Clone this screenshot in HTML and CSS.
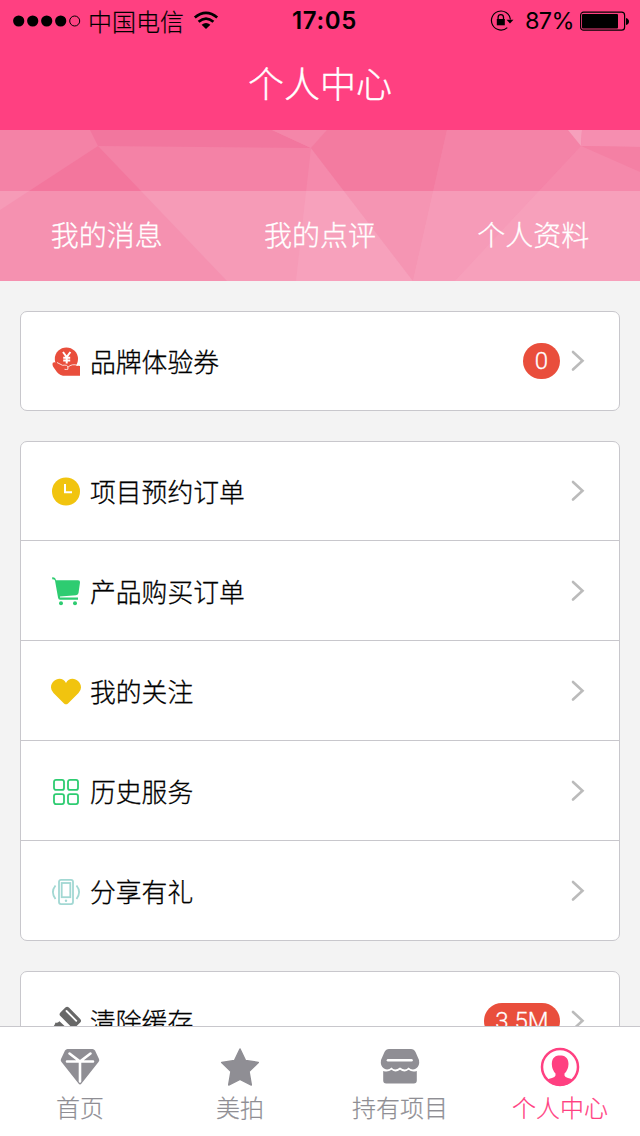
FILE: index.html
```html
<!DOCTYPE html>
<html lang="zh-CN">
<head>
<meta charset="utf-8">
<title>个人中心</title>
<link rel="stylesheet" href="styles.css">
</head>
<body>
<div class="app">
  <header class="header">
    <div class="status">
      <div class="status-left">
        <svg class="signal" width="68" height="12" viewBox="0 0 68 12"><circle cx="5.7" cy="6" r="5.6"/><circle cx="19.7" cy="6" r="5.6"/><circle cx="33.7" cy="6" r="5.6"/><circle cx="47.7" cy="6" r="5.6"/><circle cx="61.7" cy="6" r="5" fill="none" stroke="#000"/></svg>
        <span class="carrier">中国电信</span>
        <svg class="wifi" width="26" height="19" viewBox="0 0 26 19" fill="none" stroke="#000" stroke-width="2.800"><path d="M1.800 6.500Q13-2.800 24.200 6.500"/><path d="M5.600 10.800Q13 4.500 20.400 10.800"/><path d="M13 18L8.600 13.700Q13 10.300 17.400 13.700Z" fill="#000" stroke="none"/></svg>
      </div>
      <div class="clock">17:05</div>
      <div class="status-right">
        <svg class="lock" width="24" height="22" viewBox="0 0 24 22" fill="none" stroke="#000" stroke-width="1.200"><path d="M20.400 9.500A9.500 9.500 0 1 0 17.300 17.600"/><path d="M16.500 9.800h7l-3.500 3.700z" fill="#000" stroke="none"/><rect x="6.800" y="9" width="8" height="6.300" fill="#000" stroke="none"/><path d="M8.100 9.500V7.300a2.700 2.700 0 0 1 5.400 0V9.500" stroke-width="1.300"/></svg>
        <span class="percent">87%</span>
        <svg class="battery" width="49" height="20" viewBox="0 0 49 20"><rect x=".6" y="1.200" width="44" height="18" rx="3" fill="none" stroke="#000" stroke-width="1.200"/><rect x="2" y="3" width="36" height="14.600" rx="1"/><path d="M46 7q3 1 3 3.500t-3 3.500z"/></svg>
      </div>
    </div>
    <h1 class="title">个人中心</h1>
  </header>

  <section class="banner">
    <svg class="facets" width="640" height="151" viewBox="0 0 640 151">
      <rect width="640" height="151" fill="#f482a6"/>
      <path d="M90 0H272L311 18L98 16Z" fill="#f2769e"/>
      <path d="M98 16L227 151H0V80Z" fill="#f3769d"/>
      <path d="M272 0H327L311 18Z" fill="#f486a9"/>
      <path d="M311 18L413 151H296Z" fill="#f58aac"/>
      <path d="M327 0H447L413 151L311 18Z" fill="#f37ba0"/>
      <path d="M447 0H568L581 16L455 151H413Z" fill="#f483a7"/>
      <path d="M568 0H582L581 16Z" fill="#f6a0bc"/>
      <path d="M582 0H640V17L581 16Z" fill="#f68eb0"/>
      <path d="M581 16L640 17V42Z" fill="#f480a4"/>
      <path d="M581 16L640 42V151H455Z" fill="#f589ab"/>
    </svg>
    <nav class="banner-tabs"><a>我的消息</a><a>我的点评</a><a>个人资料</a></nav>
  </section>

  <main class="content">
    <section class="card">
      <div class="row">
        <svg class="icon" width="32" height="32" viewBox="0 0 32 32"><circle cx="16.400" cy="14" r="11.600" fill="#e94e3c"/><path d="M13 7L16.700 12L20.400 7M16.700 12V18.500M13.200 12.700H20.200M13.200 15.600H20.200" fill="none" stroke="#fff" stroke-width="2"/><path d="M2.800 17.800Q4.500 16.600 7.500 18.200L12.500 20.600Q17.500 20 17.500 22.800Q22 18.600 26.500 20.600L30 21V30.800H13Q8 29.500 5.500 25Q1.500 20.500 2.800 17.800Z" fill="#e94e3c"/><path d="M7 17.500L12.500 20.300Q18 19.500 17.800 22.300Q22 18.200 28 20.500M14.500 24.300Q16.500 24.800 18 24.200L17.800 22.300" fill="none" stroke="#fff" stroke-width=".8"/></svg>
        <span class="label">品牌体验券</span><span class="badge">0</span>
        <svg class="chevron" width="14" height="22" viewBox="0 0 14 22"><path d="M2 2L11.500 10.700L2 19.500"/></svg>
      </div>
    </section>

    <section class="card card-list">
      <div class="row">
        <svg class="icon" width="32" height="32" viewBox="0 0 32 32"><circle cx="16" cy="16.500" r="14" fill="#f1c40f"/><path d="M15 9V17.300H22" fill="none" stroke="#fff" stroke-width="2"/></svg>
        <span class="label">项目预约订单</span>
        <svg class="chevron" width="14" height="22" viewBox="0 0 14 22"><path d="M2 2L11.500 10.700L2 19.500"/></svg>
      </div>
      <div class="row">
        <svg class="icon" width="32" height="32" viewBox="0 0 32 32" fill="#2ecc71"><path d="M6 5.200H28Q30.300 5.300 30 7.500L28.500 18Q28.200 20 26 20.300L10 21.500V22.500H28V24.700H10Q8.300 24.700 8 22.500L5 5.500Q4.700 4.200 2.200 4.200V2.300Q5.500 2 6 5.200Z"/><circle cx="11" cy="28.200" r="2"/><circle cx="25" cy="28.200" r="2"/></svg>
        <span class="label">产品购买订单</span>
        <svg class="chevron" width="14" height="22" viewBox="0 0 14 22"><path d="M2 2L11.500 10.700L2 19.500"/></svg>
      </div>
      <div class="row">
        <svg class="icon" width="32" height="32" viewBox="0 0 32 32"><path d="M16 8C20-.1 31 4.400 31 12.400Q31 15.400 28.500 17.900L18 28.400Q16 30.200 14 28.400L3.500 17.900Q1 15.400 1 12.400C1 4.400 12-.1 16 8Z" fill="#f1c40f"/></svg>
        <span class="label">我的关注</span>
        <svg class="chevron" width="14" height="22" viewBox="0 0 14 22"><path d="M2 2L11.500 10.700L2 19.500"/></svg>
      </div>
      <div class="row">
        <svg class="icon" width="32" height="32" viewBox="0 0 32 32" fill="none" stroke="#2ecc71" stroke-width="1.800"><rect x="4" y="4.900" width="10" height="10" rx="2"/><rect x="18" y="4.900" width="10" height="10" rx="2"/><rect x="4" y="19.100" width="10" height="10" rx="2"/><rect x="18" y="19.100" width="10" height="10" rx="2"/></svg>
        <span class="label">历史服务</span>
        <svg class="chevron" width="14" height="22" viewBox="0 0 14 22"><path d="M2 2L11.500 10.700L2 19.500"/></svg>
      </div>
      <div class="row">
        <svg class="icon" width="32" height="32" viewBox="0 0 32 32" fill="none" stroke="#a2d8d3" stroke-width="1.800"><rect x="9" y="4.800" width="14" height="24.300" rx="2"/><rect x="11.700" y="8" width="8.600" height="14.200"/><path d="M5.500 10.500Q.3 17 5.500 24M26.500 10.500Q31.700 17 26.500 24"/><circle cx="16" cy="25.700" r="1.200" fill="#a2d8d3" stroke="none"/></svg>
        <span class="label">分享有礼</span>
        <svg class="chevron" width="14" height="22" viewBox="0 0 14 22"><path d="M2 2L11.500 10.700L2 19.500"/></svg>
      </div>
    </section>

    <section class="card">
      <div class="row">
        <svg class="icon" width="32" height="32" viewBox="0 0 32 32" fill="#686868"><rect x="9.800" y="6.500" width="21" height="12" rx="2.500" transform="rotate(45 20.300 12.500)"/><path d="M16.500 6L26.300 15.800" stroke="#fff" stroke-width="1.800" stroke-linecap="round"/><path d="M9.500 16.300L21 27L17 31L2 22.500Q5 20.500 5.500 17.500Q7 18.500 9.500 16.300Z"/></svg>
        <span class="label">清除缓存</span><span class="badge">3.5M</span>
        <svg class="chevron" width="14" height="22" viewBox="0 0 14 22"><path d="M2 2L11.500 10.700L2 19.500"/></svg>
      </div>
    </section>
  </main>

  <footer class="tabbar">
    <a class="tab"><svg width="40" height="40" viewBox="0 0 40 40" fill="#8f8e94"><path d="M7.500 2H32.500Q34 2 35 3.500L39 12Q39.800 13.500 38.500 15L21.500 36.500Q20 38.300 18.500 36.500L1.500 15Q.2 13.500 1 12L5 3.500Q6 2 7.500 2Z"/><path d="M9.500 6.500L20 14.500L30.500 6.500M7 14.500H33M20 14.500V34.500" fill="none" stroke="#fff" stroke-width="2.600" stroke-linecap="round"/></svg><span>首页</span></a>
    <a class="tab"><svg width="40" height="40" viewBox="0 0 40 40" fill="#8f8e94" stroke="#8f8e94" stroke-width="1.500" stroke-linejoin="round"><path d="M20 2L25.500 13.500L38.300 15.400L29 24.500L31.300 38L20 32.400L8.700 38L11 24.500L1.700 15.400L14.500 13.500Z"/></svg><span>美拍</span></a>
    <a class="tab"><svg width="40" height="40" viewBox="0 0 40 40" fill="#8f8e94"><path d="M9 2H31Q34 2 35.500 5L39 13Q40 19 36 21.500Q32 24 28.500 20.500Q25.500 24.500 20 20.500Q14.500 24.500 11.500 20.500Q8 24 4 21.500Q0 19 1 13L4.500 5Q6 2 9 2Z"/><path d="M8 13.200H31.500" stroke="#fff" stroke-width="2.600" stroke-linecap="round"/><path d="M3.200 24Q8 25.500 11.500 22.800Q15.500 26 20 22.800Q24.500 26 28.500 22.800Q32 25.500 36.800 24V33.500Q36.800 36.500 33.800 36.500H6.200Q3.200 36.500 3.200 33.500Z"/></svg><span>持有项目</span></a>
    <a class="tab tab-active"><svg width="40" height="40" viewBox="0 0 40 40" fill="#ff4081"><circle cx="20" cy="20" r="18" fill="none" stroke="#ff4081" stroke-width="2.500"/><path d="M20 8.500C24 8.500 28.500 10 28.500 17Q28.300 23 24.500 26.500V28.500Q25 30 28 31Q31 31.500 33 32.800Q27.500 39 20 39T7 32.800Q9 31.500 12 31Q15 30 15.500 28.500V26.500Q12 23 11.800 17C11.800 10 16 8.500 20 8.500Z"/></svg><span>个人中心</span></a>
  </footer>
</div>
</body>
</html>
```
FILE: styles.css
```css
* { box-sizing: border-box; }
body {
  margin: 0;
  font-family: "Noto Sans CJK SC", sans-serif;
  font-weight: 300;
  color: #000;
}
svg { display: block; flex: none; }
.app {
  display: flex;
  flex-direction: column;
  width: 640px;
  height: 1136px;
  overflow: hidden;
  background: #f3f3f3;
}
.header { flex: none; height: 130px; background: #ff4081; }
.status {
  display: grid;
  grid-template-columns: 1fr auto 1fr;
  align-items: center;
  height: 40px;
  padding: 0 11px 0 13px;
  font-size: 24px;
}
.status-left, .status-right { display: flex; align-items: center; }
.status-right { justify-content: flex-end; }
.carrier { margin-left: 7px; line-height: 40px; -webkit-text-stroke: 0.2px; }
.wifi { margin-left: 9px; }
.clock { font: 600 24px/40px Inter, sans-serif; letter-spacing: 0.7px; padding: 1px 0 0 7px; }
.percent { margin: 0 6px 0 11px; font: 400 23.5px/40px Inter, sans-serif; letter-spacing: -0.6px; }
.title {
  margin: 0;
  font-size: 36px;
  font-weight: 300;
  line-height: 85px;
  text-align: center;
  color: #fff;
  -webkit-text-stroke: 0.4px;
}
.banner { display: grid; flex: none; height: 151px; }
.facets { grid-area: 1 / 1; }
.banner-tabs {
  grid-area: 1 / 1;
  align-self: end;
  display: grid;
  grid-template-columns: repeat(3, 1fr);
  height: 90px;
  background: rgba(255, 255, 255, 0.2);
  color: #fff;
  font-size: 28px;
  line-height: 87px;
  text-align: center;
  -webkit-text-stroke: 0.3px;
}
.content {
  flex: 1;
  min-height: 0;
  overflow: hidden;
  display: flex;
  flex-direction: column;
  gap: 30px;
  padding: 30px 20px 0;
}
.card {
  flex: none;
  border: 1px solid #c8c7cc;
  border-radius: 7px;
  background: #fff;
}
.row {
  display: flex;
  align-items: center;
  height: 100px;
  padding: 0 34px 0 29px;
  border-bottom: 1px solid #c8c7cc;
}
.row:last-child { height: 98px; border-bottom: 0; }
.card-list .row:first-child, .card-list .row:last-child { height: 99px; }
.label {
  flex: 1;
  margin-left: 8px;
  font-size: 25.8px;
  line-height: 98px;
  -webkit-text-stroke: 0.3px;
}
.chevron { fill: none; stroke: #bbb; stroke-width: 2.6; stroke-linecap: round; }
.badge {
  height: 36px;
  min-width: 37px;
  padding: 0 11.5px;
  margin-right: 11px;
  border-radius: 18px;
  background: #e94e3c;
  color: #fff;
  font: 300 24px/36px Roboto, sans-serif;
  -webkit-text-stroke: 0.3px;
  text-align: center;
}
.tabbar {
  flex: none;
  display: grid;
  grid-template-columns: repeat(4, 1fr);
  height: 110px;
  border-top: 1px solid #c8c7cc;
  background: #fff;
  color: #8f8e94;
}
.tab {
  display: flex;
  flex-direction: column;
  align-items: center;
  padding-top: 20px;
  font-size: 24px;
  line-height: 39px;
  -webkit-text-stroke: 0.2px;
}
.tab-active { color: #ff4081; }
```
